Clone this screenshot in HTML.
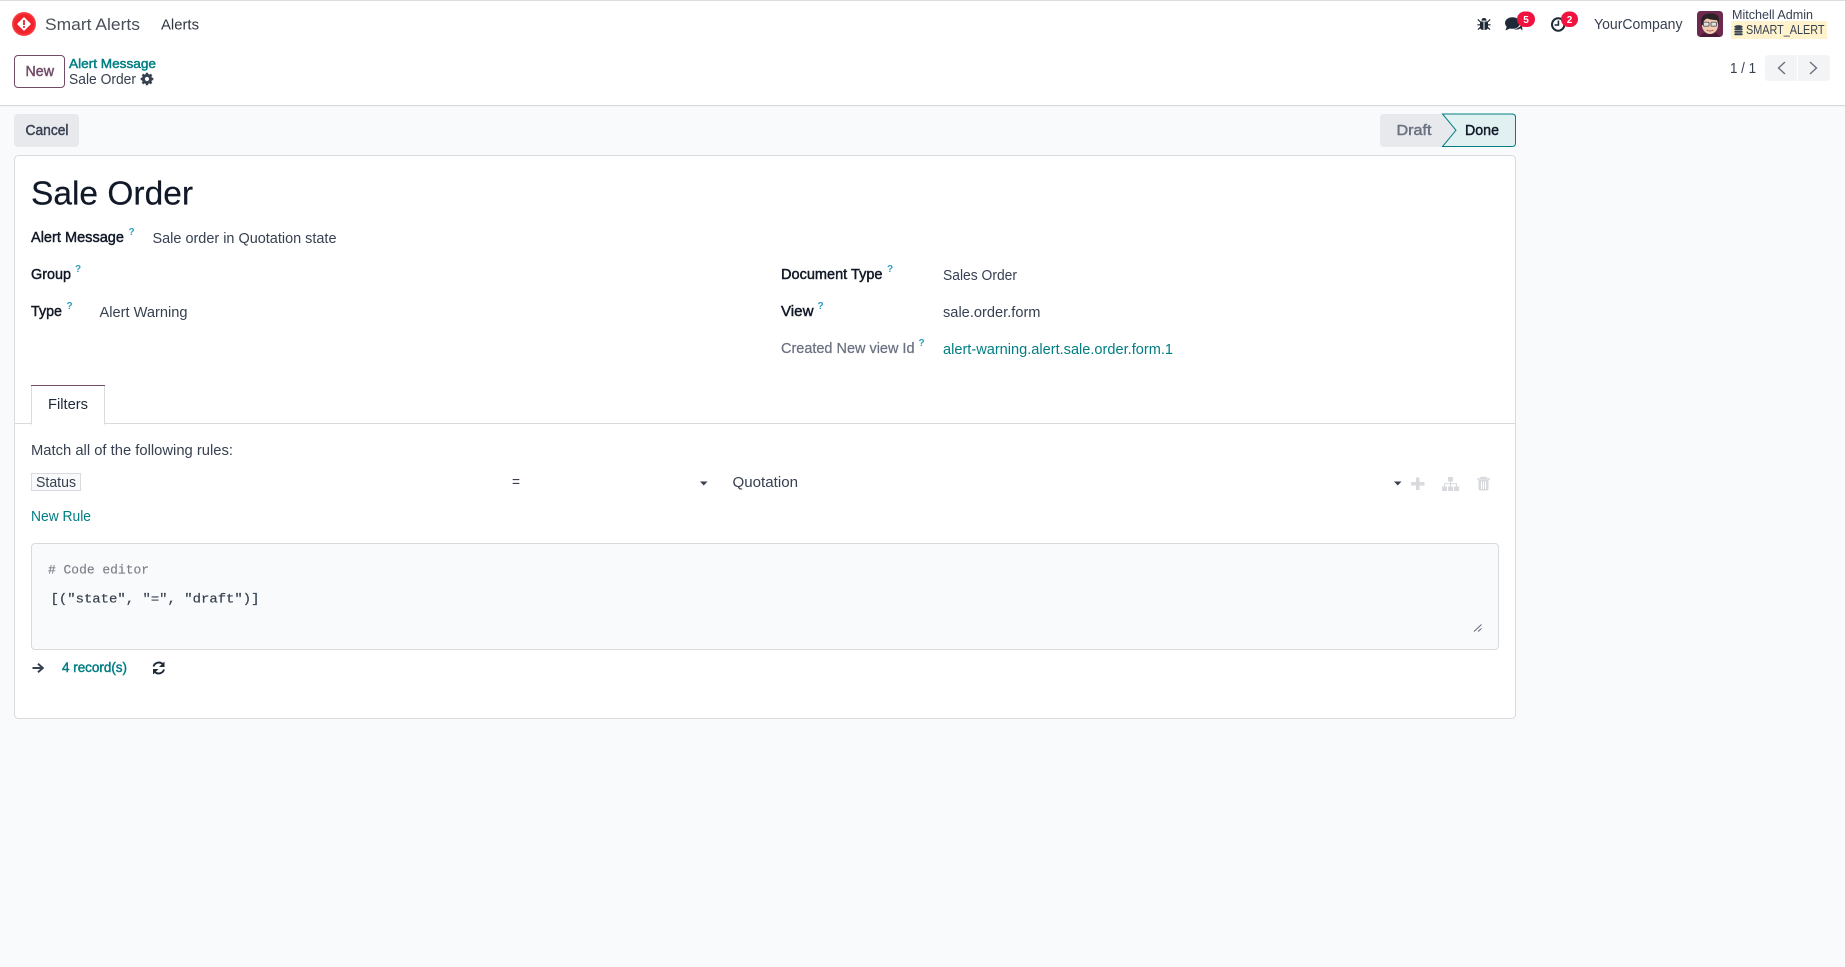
<!DOCTYPE html>
<html lang="en">
<head>
<meta charset="utf-8">
<title>Sale Order - Smart Alerts</title>
<style>
html,body{margin:0;padding:0;background:#f9fafb;width:1845px;height:967px;overflow:hidden}
svg{display:block;position:absolute;left:0;top:0}
text{font-family:"Liberation Sans",sans-serif;font-size:14.5px;fill:#374151;white-space:pre}
.m{stroke-width:.45px}
.mono{font-family:"Liberation Mono",monospace}
.q{font-size:10px;font-weight:700;fill:#2a9fc0}
</style>
</head>
<body>
<svg width="1845" height="967" viewBox="0 0 1845 967" xmlns="http://www.w3.org/2000/svg">
<defs><radialGradient id="lg" cx="50%" cy="50%" r="50%"><stop offset="0" stop-color="#ee1c25"/><stop offset=".8" stop-color="#f2242c"/><stop offset="1" stop-color="#fb4a50"/></radialGradient></defs>
<!-- header -->
<rect x="0" y="0" width="1845" height="105" fill="#fff"/>
<rect x="0" y="0" width="1845" height="1" fill="#dcdde0"/>
<rect x="0" y="105" width="1845" height="1.2" fill="#d8dadd"/>
<circle cx="24" cy="24" r="12" fill="url(#lg)"/>
<path d="M24 18 L30 24 L24 30 L18 24Z" fill="#fff" stroke="#fff" stroke-width="1.5" stroke-linejoin="round"/>
<rect x="23.1" y="20" width="1.8" height="5" fill="#e8202a"/>
<rect x="23.1" y="26" width="1.8" height="1.8" fill="#e8202a"/>
<text x="45" y="30" textLength="95" lengthAdjust="spacingAndGlyphs" style="font-size:17px;fill:#4a4f59">Smart Alerts</text>
<text x="161" y="29.5" textLength="38" lengthAdjust="spacingAndGlyphs" style="font-size:15px;fill:#2f3542">Alerts</text>

<rect x="14.5" y="55.5" width="50" height="32" rx="3.5" fill="#fff" stroke="#714b67"/>
<text class="m" x="25.5" y="76" textLength="28.5" lengthAdjust="spacingAndGlyphs" style="fill:#714b67;stroke:#714b67;font-size:14.5px">New</text>
<text class="m" x="69" y="68" textLength="87" lengthAdjust="spacingAndGlyphs" style="font-size:13px;fill:#017e84;stroke:#017e84">Alert Message</text>
<text x="69" y="84" textLength="67" lengthAdjust="spacingAndGlyphs" style="fill:#374151">Sale Order</text>
<g transform="translate(147,79)">
<circle r="3.6" fill="none" stroke="#374151" stroke-width="3"/>
<path d="M0-6.3V-3.5M0 3.5V6.3M-6.3 0H-3.5M3.5 0H6.3M-4.5-4.5L-2.5-2.5M2.5 2.5L4.5 4.5M-4.5 4.5L-2.5 2.5M2.5-2.5L4.5-4.5" stroke="#374151" stroke-width="2.4"/>
</g>

<!-- systray -->
<g transform="translate(1484,24)" fill="#1f2937">
<path d="M-3-2.5H3Q4-2.5 4-1V3.5Q4 6 0 6Q-4 6-4 3.5V-1Q-4-2.5-3-2.5Z"/>
<path d="M-2.6-3.4Q-2.4-6 0-6Q2.4-6 2.6-3.4Z"/>
<path d="M-6.2-4.6L-3.5-2M6.2-4.6L3.5-2M-6.6.8H-3.5M6.6.8H3.5M-6 5.6L-3.4 3.2M6 5.6L3.4 3.2" stroke="#1f2937" stroke-width="1.2" fill="none"/>
<rect x="-.5" y="-2.5" width="1" height="8.5" fill="#fff"/>
</g>
<g fill="#1f2937">
<ellipse cx="1512.5" cy="23" rx="7.5" ry="5.8"/>
<path d="M1507 26L1505.5 30.5L1512 27.5Z"/>
<path d="M1514 29.4Q1518 30 1520.5 28.5L1522.5 30.8L1522 26Q1522.5 24.5 1522.5 23.5Q1520 28 1514 29.4Z"/>
</g>
<rect x="1517" y="11.5" width="18" height="15.5" rx="7.7" fill="#f0133f"/>
<text x="1523.2" y="23" style="font-size:10px;font-weight:700;fill:#fff">5</text>
<circle cx="1558.2" cy="24.5" r="6.2" fill="none" stroke="#1f2937" stroke-width="2"/>
<path d="M1558.4 20.5V25H1554.6" fill="none" stroke="#1f2937" stroke-width="1.6"/>
<rect x="1561" y="11.5" width="17" height="15.5" rx="7.7" fill="#f0133f"/>
<text x="1566.8" y="23" style="font-size:10px;font-weight:700;fill:#fff">2</text>
<text x="1594" y="29" textLength="88.5" lengthAdjust="spacingAndGlyphs" style="font-size:14.5px;fill:#374151">YourCompany</text>

<!-- avatar -->
<rect x="1697" y="11" width="26" height="26" rx="3.5" fill="#6d2a4e"/>
<path d="M1700 37Q1702 32 1710 32Q1718 32 1720 37Z" fill="#4a1a35"/>
<ellipse cx="1710" cy="25" rx="8" ry="9" fill="#f3cdb3"/>
<path d="M1701.5 25Q1699.5 15 1707 14Q1714 12 1718 16Q1720 20 1718.5 25L1717.5 20Q1712 20.5 1707 18.5Q1703 20 1703 25Z" fill="#2c2226"/>
<g fill="#e4e2de" stroke="#55565a" stroke-width=".9"><rect x="1703.5" y="22.2" width="5.5" height="4" rx=".8"/><rect x="1711" y="22.2" width="5.5" height="4" rx=".8"/></g>
<path d="M1706.5 30Q1710 32 1713.5 30" fill="none" stroke="#a05a4e" stroke-width="1"/>

<text x="1732" y="19" textLength="81" lengthAdjust="spacingAndGlyphs" style="font-size:13px;fill:#374151">Mitchell Admin</text>
<rect x="1731" y="21" width="96" height="18" fill="#fff3cd"/>
<g fill="#374151"><ellipse cx="1738.5" cy="26.8" rx="4.2" ry="1.7"/><rect x="1734.3" y="28.3" width="8.4" height="2" rx="1"/><rect x="1734.3" y="30.8" width="8.4" height="2" rx="1"/><rect x="1734.3" y="33.2" width="8.4" height="2" rx="1"/></g>
<text x="1746" y="34" textLength="78.5" lengthAdjust="spacingAndGlyphs" style="font-size:12.5px;fill:#374151">SMART_ALERT</text>

<!-- pager -->
<text x="1730" y="73" textLength="26" lengthAdjust="spacingAndGlyphs" style="font-size:14.5px;fill:#374151">1 / 1</text>
<path d="M1768.5 55H1796.8V81H1768.5Q1765 81 1765 77.5V58.5Q1765 55 1768.5 55Z" fill="#f3f4f6"/>
<path d="M1798 55H1826.5Q1830 55 1830 58.5V77.5Q1830 81 1826.5 81H1798Z" fill="#f3f4f6"/>
<path d="M1785 62L1778.5 68L1785 74" fill="none" stroke="#6b7280" stroke-width="1.4"/>
<path d="M1810 62L1816.5 68L1810 74" fill="none" stroke="#6b7280" stroke-width="1.4"/>

<!-- control panel buttons -->
<rect x="14" y="114" width="65" height="33" rx="4" fill="#e7e9ed"/>
<text class="m" x="25.5" y="135" textLength="43" lengthAdjust="spacingAndGlyphs" style="fill:#374151;stroke:#374151;font-size:14.5px">Cancel</text>
<path d="M1384 114H1442L1456 130.5L1442 147H1384Q1380 147 1380 143V118Q1380 114 1384 114Z" fill="#e7e9ed"/>
<text class="m" x="1396.5" y="135" textLength="35" lengthAdjust="spacingAndGlyphs" style="fill:#6b7280;stroke:#6b7280;font-size:14.5px">Draft</text>
<path d="M1442.5 114H1512Q1515.5 114 1515.5 117.5V143Q1515.5 146.5 1512 146.5H1442.5L1456 130.3Z" fill="#e1f1f2" stroke="#017e84"/>
<text class="m" x="1465" y="135" textLength="34" lengthAdjust="spacingAndGlyphs" style="fill:#111827;stroke:#111827;font-size:14.5px">Done</text>

<!-- card -->
<rect x="14.5" y="155.5" width="1501" height="563" rx="4" fill="#fff" stroke="#d8dadd"/>
<text class="m" x="31" y="204.5" textLength="162" lengthAdjust="spacingAndGlyphs" style="font-size:33px;fill:#111827;stroke:#111827;stroke-width:.2px">Sale Order</text>

<text class="m" x="31" y="242" textLength="93" lengthAdjust="spacingAndGlyphs" style="fill:#111827;stroke:#111827;font-size:14.5px">Alert Message</text>
<text class="q" x="128.5" y="235">?</text>
<text x="152.5" y="243" textLength="184" lengthAdjust="spacingAndGlyphs">Sale order in Quotation state</text>

<text class="m" x="31" y="279" textLength="40" lengthAdjust="spacingAndGlyphs" style="fill:#111827;stroke:#111827;font-size:14.5px">Group</text>
<text class="q" x="75" y="272">?</text>

<text class="m" x="31" y="316" textLength="31" lengthAdjust="spacingAndGlyphs" style="fill:#111827;stroke:#111827;font-size:14.5px">Type</text>
<text class="q" x="66.5" y="309">?</text>
<text x="99.5" y="317" textLength="88" lengthAdjust="spacingAndGlyphs">Alert Warning</text>

<text class="m" x="781" y="279" textLength="101.5" lengthAdjust="spacingAndGlyphs" style="fill:#111827;stroke:#111827;font-size:14.5px">Document Type</text>
<text class="q" x="887" y="272">?</text>
<text x="943" y="280" textLength="74" lengthAdjust="spacingAndGlyphs">Sales Order</text>

<text class="m" x="781" y="316" textLength="32.5" lengthAdjust="spacingAndGlyphs" style="fill:#111827;stroke:#111827;font-size:14.5px">View</text>
<text class="q" x="817.5" y="309">?</text>
<text x="943" y="317" textLength="97.5" lengthAdjust="spacingAndGlyphs">sale.order.form</text>

<text class="m" x="781" y="353" textLength="133.5" lengthAdjust="spacingAndGlyphs" style="fill:#6b7280;stroke:#6b7280;stroke-width:.25px;font-size:14.5px">Created New view Id</text>
<text class="q" x="918.5" y="346">?</text>
<text x="943" y="354" textLength="230" lengthAdjust="spacingAndGlyphs" style="fill:#017e84">alert-warning.alert.sale.order.form.1</text>

<!-- tab -->
<rect x="15" y="423" width="1500" height="1" fill="#d8dadd"/>
<rect x="31.5" y="385.5" width="73" height="38.5" fill="#fff" stroke="#d8dadd"/>
<rect x="31" y="385" width="74" height="1" fill="#714b67"/>
<rect x="32" y="423" width="72" height="1.5" fill="#fff"/>
<text x="48" y="409" textLength="40" lengthAdjust="spacingAndGlyphs" style="fill:#1f2937">Filters</text>

<!-- domain -->
<text x="31" y="455" textLength="202" lengthAdjust="spacingAndGlyphs">Match all of the following rules:</text>
<rect x="31.5" y="473.5" width="49" height="17" fill="#f9fafb" stroke="#d8dadd"/>
<text x="36" y="487" textLength="40" lengthAdjust="spacingAndGlyphs">Status</text>
<text x="512" y="486.5" textLength="8" lengthAdjust="spacingAndGlyphs">=</text>
<path d="M700 481.5H707.5L703.75 485.5Z" fill="#374151"/>
<text x="732.5" y="487" textLength="65.5" lengthAdjust="spacingAndGlyphs">Quotation</text>
<path d="M1394 481.5H1401.5L1397.75 485.5Z" fill="#374151"/>
<path d="M1416 477.5H1419.5V482H1424.5V485.5H1419.5V490H1416V485.5H1411V482H1416Z" fill="#d8dadd"/>
<g fill="#d8dadd"><rect x="1448" y="477" width="5" height="4.5" rx=".5"/><rect x="1442" y="486.5" width="5" height="4.5" rx=".5"/><rect x="1448" y="486.5" width="5" height="4.5" rx=".5"/><rect x="1454" y="486.5" width="5" height="4.5" rx=".5"/></g>
<path d="M1444.5 486.5V483.8H1456.5V486.5M1450.5 481.5V486.5" fill="none" stroke="#d8dadd"/>
<path d="M1477 479H1490M1481 479V477.5H1486V479" fill="none" stroke="#d8dadd" stroke-width="1.5"/>
<path d="M1478.5 480V489Q1478.5 490.5 1480 490.5H1487Q1488.5 490.5 1488.5 489V480ZM1481 481.5V489H1482V481.5ZM1483 481.5V489H1484V481.5ZM1485 481.5V489H1486V481.5Z" fill="#d8dadd" fill-rule="evenodd"/>
<text x="31" y="521" textLength="60" lengthAdjust="spacingAndGlyphs" style="fill:#017e84">New Rule</text>

<!-- code -->
<rect x="31.5" y="543.5" width="1467" height="106" rx="3.5" fill="#f9fafb" stroke="#d8dadd"/>
<text class="mono" x="48" y="573.5" textLength="101" lengthAdjust="spacingAndGlyphs" style="font-size:13px;fill:#7c7f89;stroke:#7c7f89;stroke-width:.15px"># Code editor</text>
<text class="mono" x="50.5" y="602.5" textLength="209" lengthAdjust="spacingAndGlyphs" style="font-size:13.3px;fill:#374151;stroke:#374151;stroke-width:.2px">[("state", "=", "draft")]</text>
<path d="M1474 631.5L1481.5 624.5M1478 631.5L1481.5 628.5" fill="none" stroke="#5b6270" stroke-width=".9"/>

<!-- footer -->
<path d="M32.5 668H42.5M38 663.8L42.8 668L38 672.2" fill="none" stroke="#374151" stroke-width="2"/>
<text class="m" x="62" y="672" textLength="65" lengthAdjust="spacingAndGlyphs" style="fill:#017e84;stroke:#017e84;font-size:13.5px">4 record(s)</text>
<path d="M153.5 666.5A5.5 5.5 0 0 1 163 664.5M164 669.5A5.5 5.5 0 0 1 154.5 671.5" fill="none" stroke="#1f2937" stroke-width="1.9"/>
<path d="M164.5 661.5V667H159ZM153 674.5V669H158.5Z" fill="#1f2937"/>
</svg>
</body>
</html>
